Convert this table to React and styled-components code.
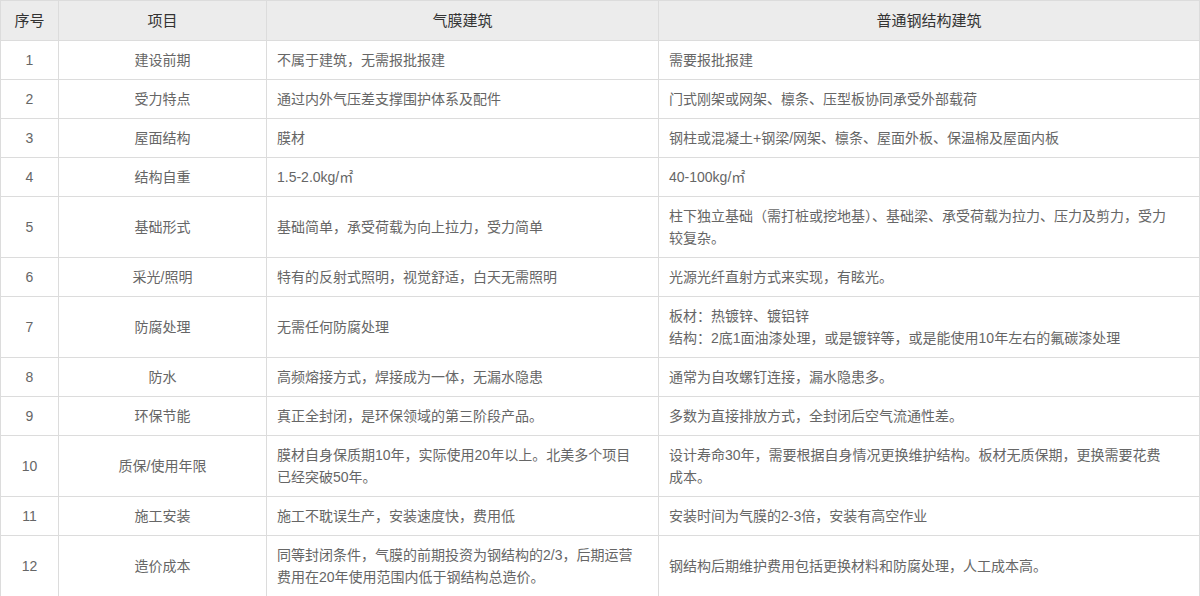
import React from "react";
import styled, { createGlobalStyle } from "styled-components";

const GlobalStyle = createGlobalStyle`
  body {
    margin: 0;
    background: #fff;
    font-family: "Liberation Sans", "Noto Sans CJK SC", sans-serif;
  }
`;

const Table = styled.table`
  width: 1200px;
  border-collapse: collapse;
  table-layout: fixed;
  font-size: 14px;
  color: #666;
`;

const HeadCell = styled.th`
  background: #ececec;
  border: 1px solid #dcdcdc;
  font-weight: normal;
  font-size: 15px;
  color: #333;
  line-height: 22px;
  padding: 9px 10px 8px;
  text-align: center;
`;

const Cell = styled.td`
  border: 1px solid #dcdcdc;
  line-height: 22px;
  padding: 8px 10px;
  text-align: ${({ $center }) => ($center ? "center" : "left")};
  vertical-align: middle;
`;

const Line = styled.div`
  white-space: nowrap;
`;

// multi-line cells are given as arrays so the breaks match the original
const rows = [
  ["建设前期", "不属于建筑，无需报批报建", "需要报批报建"],
  ["受力特点", "通过内外气压差支撑围护体系及配件", "门式刚架或网架、檩条、压型板协同承受外部载荷"],
  ["屋面结构", "膜材", "钢柱或混凝土+钢梁/网架、檩条、屋面外板、保温棉及屋面内板"],
  ["结构自重", "1.5-2.0kg/㎡", "40-100kg/㎡"],
  [
    "基础形式",
    "基础简单，承受荷载为向上拉力，受力简单",
    ["柱下独立基础（需打桩或挖地基）、基础梁、承受荷载为拉力、压力及剪力，受力", "较复杂。"],
  ],
  ["采光/照明", "特有的反射式照明，视觉舒适，白天无需照明", "光源光纤直射方式来实现，有眩光。"],
  [
    "防腐处理",
    "无需任何防腐处理",
    ["板材：热镀锌、镀铝锌", "结构：2底1面油漆处理，或是镀锌等，或是能使用10年左右的氟碳漆处理"],
  ],
  ["防水", "高频熔接方式，焊接成为一体，无漏水隐患", "通常为自攻螺钉连接，漏水隐患多。"],
  ["环保节能", "真正全封闭，是环保领域的第三阶段产品。", "多数为直接排放方式，全封闭后空气流通性差。"],
  [
    "质保/使用年限",
    ["膜材自身保质期10年，实际使用20年以上。北美多个项目", "已经突破50年。"],
    ["设计寿命30年，需要根据自身情况更换维护结构。板材无质保期，更换需要花费", "成本。"],
  ],
  ["施工安装", "施工不耽误生产，安装速度快，费用低", "安装时间为气膜的2-3倍，安装有高空作业"],
  [
    "造价成本",
    ["同等封闭条件，气膜的前期投资为钢结构的2/3，后期运营", "费用在20年使用范围内低于钢结构总造价。"],
    "钢结构后期维护费用包括更换材料和防腐处理，人工成本高。",
  ],
];

function renderText(value) {
  if (Array.isArray(value)) {
    return value.map((line, i) => <Line key={i}>{line}</Line>);
  }
  return value;
}

export default function App() {
  return (
    <>
      <GlobalStyle />
      <Table>
        <colgroup>
          <col style={{ width: 58 }} />
          <col style={{ width: 208 }} />
          <col style={{ width: 392 }} />
          <col />
        </colgroup>
        <thead>
          <tr>
            <HeadCell>序号</HeadCell>
            <HeadCell>项目</HeadCell>
            <HeadCell>气膜建筑</HeadCell>
            <HeadCell>普通钢结构建筑</HeadCell>
          </tr>
        </thead>
        <tbody>
          {rows.map((row, i) => (
            <tr key={i}>
              <Cell $center>{i + 1}</Cell>
              <Cell $center>{row[0]}</Cell>
              <Cell>{renderText(row[1])}</Cell>
              <Cell>{renderText(row[2])}</Cell>
            </tr>
          ))}
        </tbody>
      </Table>
    </>
  );
}
